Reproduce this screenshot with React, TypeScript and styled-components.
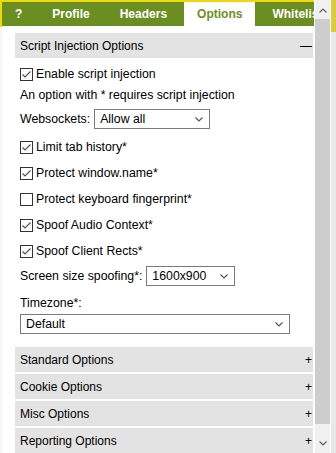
import styled, { createGlobalStyle } from "styled-components";

const GlobalStyle = createGlobalStyle`
  html, body {
    margin: 0;
    padding: 0;
  }
  body {
    font-family: "Liberation Sans", Arial, sans-serif;
    color: #000;
    background: #fff;
  }
`;

const Screen = styled.div`
  width: 336px;
  height: 453px;
  overflow: hidden;
  display: flex;
  padding-left: 2px;
  box-sizing: border-box;
  background: linear-gradient(#efd80b 0 27px, #f6f6f6 27px);
`;

const Popup = styled.div`
  width: 312px;
  margin-top: 2px;
  background: #fff;
  display: flex;
  flex-direction: column;
`;

const TabBar = styled.div`
  height: 24px;
  flex-shrink: 0;
  display: flex;
  gap: 4px;
  background: #6b8e23;
  overflow: hidden;
  white-space: nowrap;
`;

const Tab = styled.div<{ $active?: boolean }>`
  padding: 0 13px;
  display: flex;
  align-items: center;
  font-size: 12px;
  font-weight: bold;
  color: ${(p) => (p.$active ? "#6b8e23" : "#fff")};
  background: ${(p) => (p.$active ? "#fff" : "transparent")};
`;

const Body = styled.div`
  padding: 7px 1px 0 13px;
  display: flex;
  flex-direction: column;
`;

const SectionHeader = styled.div<{ $top?: number }>`
  height: 25px;
  flex-shrink: 0;
  margin-top: ${(p) => p.$top ?? 0}px;
  padding: 0 1px 0 5px;
  display: flex;
  align-items: center;
  justify-content: space-between;
  background: #e3e3e3;
  font-size: 12px;
`;

const Sign = styled.span`
  font-size: 12px;
`;

const Fields = styled.div`
  padding-left: 5px;
  display: flex;
  flex-direction: column;
`;

const Row = styled.div<{ $top: number }>`
  height: 20px;
  margin-top: ${(p) => p.$top}px;
  display: flex;
  align-items: center;
  font-size: 12.3px;
  white-space: nowrap;
`;

const Box = styled.span`
  width: 13px;
  height: 13px;
  box-sizing: border-box;
  border: 1px solid #333;
  background: #fff;
  margin-right: 3px;
  flex-shrink: 0;
  display: flex;
  align-items: center;
  justify-content: center;
`;

const SelectBox = styled.div<{ $width: number }>`
  width: ${(p) => p.$width}px;
  height: 20px;
  box-sizing: border-box;
  border: 1px solid #7a7a7a;
  background: #fff;
  padding: 0 6px 0 5px;
  display: flex;
  align-items: center;
  justify-content: space-between;
  font-size: 12.3px;
`;

const Label = styled.span`
  margin-right: 4px;
`;

const Scrollbar = styled.div`
  width: 15px;
  height: 453px;
  border-left: 1px solid #fff;
  background: #f0f0f0;
  display: flex;
  flex-direction: column;
  flex-shrink: 0;
`;

const ArrowTop = styled.div`
  height: 19px;
  padding-top: 2px;
  box-sizing: border-box;
  display: flex;
  align-items: center;
  justify-content: center;
`;

const Thumb = styled.div`
  height: 405px;
  background: #cdcdcd;
`;

const ArrowBottom = styled.div`
  flex: 1;
  padding-bottom: 7px;
  display: flex;
  align-items: flex-end;
  justify-content: center;
`;

const Edge = styled.div`
  width: 5px;
  flex-shrink: 0;
  border-left: 1px solid #fff;
  background: linear-gradient(#dccb3c 0 32px, #e8e8e8 32px);
`;

function Check({ on }: { on: boolean }) {
  return (
    <Box>
      {on && (
        <svg width="11" height="11" viewBox="0 0 11 11">
          <polyline
            points="1.5,5.5 4,8 9.5,2.5"
            fill="none"
            stroke="#555"
            strokeWidth="1.2"
          />
        </svg>
      )}
    </Box>
  );
}

function Chevron({ up, color = "#555" }: { up?: boolean; color?: string }) {
  return (
    <svg width="8" height="5" viewBox="0 0 8 5">
      <polyline
        points={up ? "0.5,4.5 4,1 7.5,4.5" : "0.5,0.5 4,4 7.5,0.5"}
        fill="none"
        stroke={color}
        strokeWidth="1.2"
      />
    </svg>
  );
}

function Select({ value, width }: { value: string; width: number }) {
  return (
    <SelectBox $width={width}>
      <span>{value}</span>
      <Chevron />
    </SelectBox>
  );
}

const checks = [
  { label: "Limit tab history*", on: true, top: 8 },
  { label: "Protect window.name*", on: true, top: 6 },
  { label: "Protect keyboard fingerprint*", on: false, top: 6 },
  { label: "Spoof Audio Context*", on: true, top: 6 },
  { label: "Spoof Client Rects*", on: true, top: 6 },
];

const closed = ["Standard Options", "Cookie Options", "Misc Options", "Reporting Options"];

export default function App() {
  return (
    <>
      <GlobalStyle />
      <Screen>
        <Popup>
          <TabBar>
            <Tab>?</Tab>
            <Tab>Profile</Tab>
            <Tab>Headers</Tab>
            <Tab $active>Options</Tab>
            <Tab>Whitelist</Tab>
          </TabBar>
          <Body>
            <SectionHeader>
              <span>Script Injection Options</span>
              <Sign>—</Sign>
            </SectionHeader>
            <Fields>
              <Row $top={6}>
                <Check on />
                Enable script injection
              </Row>
              <Row $top={1}>An option with * requires script injection</Row>
              <Row $top={4}>
                <Label>Websockets:</Label>
                <Select value="Allow all" width={116} />
              </Row>
              {checks.map((c) => (
                <Row key={c.label} $top={c.top}>
                  <Check on={c.on} />
                  {c.label}
                </Row>
              ))}
              <Row $top={5}>
                <Label>Screen size spoofing*:</Label>
                <Select value="1600x900" width={89} />
              </Row>
              <Row $top={7}>Timezone*:</Row>
              <Row $top={1}>
                <Select value="Default" width={270} />
              </Row>
            </Fields>
            {closed.map((name, i) => (
              <SectionHeader key={name} $top={i === 0 ? 13 : 2}>
                <span>{name}</span>
                <Sign>+</Sign>
              </SectionHeader>
            ))}
          </Body>
        </Popup>
        <Scrollbar>
          <ArrowTop>
            <Chevron up color="#606060" />
          </ArrowTop>
          <Thumb />
          <ArrowBottom>
            <Chevron color="#606060" />
          </ArrowBottom>
        </Scrollbar>
        <Edge />
      </Screen>
    </>
  );
}
